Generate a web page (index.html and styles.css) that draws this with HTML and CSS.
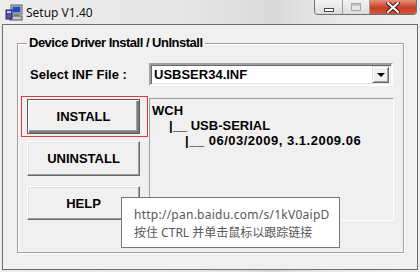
FILE: index.html
```html
<!DOCTYPE html>
<html lang="en">
<head>
	<meta charset="UTF-8">
	<title>Setup V1.40</title>
	<link rel="stylesheet" href="styles.css">
</head>
<body>
	<div class="window">
		<div class="titlebar">
			<svg class="app-icon" width="18" height="17" viewBox="0 0 18 17">
				<rect x="6" y="1" width="11" height="9" fill="#d8d8d8" stroke="#555"/>
				<rect x="7.5" y="2.5" width="8" height="6" fill="#1d4fc4"/>
				<rect x="9" y="10" width="5" height="2" fill="#888"/>
				<rect x="5" y="12" width="12" height="4" fill="#c8c8c8" stroke="#555"/>
				<rect x="1" y="6" width="6" height="9" fill="#5a4fa8" stroke="#2a2060"/>
				<rect x="2" y="7" width="4" height="2" fill="#c7c2ee"/>
			</svg>
			<span class="title">Setup V1.40</span>
			<div class="caption-buttons">
				<div class="cap-btn cap-min"><span class="min-bar"></span></div>
				<div class="cap-btn cap-max"><span class="max-box"></span></div>
				<div class="cap-btn cap-close">
					<svg width="14" height="11" viewBox="0 0 14 11">
						<path d="M2 1 L12 10 M12 1 L2 10" stroke="#4a1a12" stroke-width="4" stroke-linecap="square"/>
						<path d="M2 1 L12 10 M12 1 L2 10" stroke="#fff" stroke-width="2" stroke-linecap="square"/>
					</svg>
				</div>
			</div>
		</div>
		<div class="client">
			<fieldset class="group">
				<legend>Device Driver Install / UnInstall</legend>
				<div class="layout">
					<label class="inf-label">Select INF File :</label>
					<div class="combo">
						<span class="combo-text">USBSER34.INF</span>
						<span class="combo-arrow"><i></i></span>
					</div>
					<div class="buttons">
						<div class="focus-frame">
							<div class="btn btn-default">INSTALL</div>
						</div>
						<div class="btn btn-uninstall">UNINSTALL</div>
						<div class="btn btn-help">HELP</div>
					</div>
					<div class="info-panel">
						<div class="line">WCH</div>
						<div class="line indent1">|__ USB-SERIAL</div>
						<div class="line indent2">|__ 06/03/2009, 3.1.2009.06</div>
					</div>
				</div>
			</fieldset>
		</div>
		<div class="tooltip">
			<div class="tip-url">http://pan.baidu.com/s/1kV0aipD</div>
			<div>按住 CTRL 并单击鼠标以跟踪链接</div>
		</div>
	</div>
</body>
</html>
```

FILE: styles.css
```css
* {
	box-sizing: border-box;
}
body {
	margin: 0;
	width: 420px;
	height: 272px;
	overflow: hidden;
	font-family: "Liberation Sans", Arial, sans-serif;
}
.window {
	position: relative;
	width: 420px;
	height: 272px;
	display: flex;
	flex-direction: column;
	background: linear-gradient(to right, #ececec 0%, #e6e6e6 45%, #d9d9d9 65%, #e9e9e9 80%, #eeeeee 100%);
}
.titlebar {
	height: 24px;
	display: flex;
	align-items: center;
	padding-left: 5px;
}
.app-icon {
	margin-right: 3px;
	margin-top: 1px;
}
.title {
	font-family: "Noto Sans", "Segoe UI", sans-serif;
	font-size: 12px;
	color: #111;
	text-shadow: 0 0 6px #fff;
}
.caption-buttons {
	margin-left: auto;
	margin-right: 3px;
	align-self: flex-start;
	display: flex;
	height: 15px;
	border: 1px solid #707070;
	border-top: none;
	border-radius: 0 0 4px 4px;
	overflow: hidden;
}
.cap-btn {
	height: 14px;
	display: flex;
	align-items: center;
	justify-content: center;
}
.cap-min {
	width: 28px;
	background: linear-gradient(#f4f4f4, #dcdcdc);
	border-right: 1px solid #9a9a9a;
}
.cap-max {
	width: 27px;
	background: linear-gradient(#f4f4f4, #dcdcdc);
	border-right: 1px solid #9a9a9a;
}
.cap-close {
	width: 46px;
	background: linear-gradient(#e8927c, #c73e26 55%, #d4553a);
}
.min-bar {
	width: 10px;
	height: 4px;
	margin-top: 5px;
	border: 1px solid #4a4a4a;
	background: #fff;
}
.max-box {
	width: 10px;
	height: 8px;
	border: 1px solid #a8a8a8;
	box-shadow: inset 0 2px 0 #c4c4c4;
}
.client {
	flex: 1;
	margin: 0 2px 2px 2px;
	border: 1px solid #6d6d6d;
	background: #f0f0f0;
	padding: 10px 13px 16px 14px;
	display: flex;
	flex-direction: column;
}
.group {
	flex: 1;
	margin: 0;
	padding: 0 0 0 3px;
	border: 1px solid #a0a0a0;
	box-shadow: 1px 1px 0 #fff, inset 1px 1px 0 #fff;
	min-width: 0;
}
.group legend {
	margin-left: 6px;
	padding: 0 2px;
	font-size: 13px;
	letter-spacing: -0.5px;
	font-weight: bold;
	line-height: 16px;
	color: #000;
}
.layout {
	display: grid;
	grid-template-columns: 127px 245px;
	grid-template-rows: 23px auto;
	column-gap: 1px;
	row-gap: 10px;
	margin-top: 12px;
}
.inf-label {
	align-self: center;
	padding-left: 9px;
	font-size: 13px;
	font-weight: bold;
}
.combo {
	display: flex;
	align-items: center;
	height: 23px;
	width: 244px;
	background: #fff;
	border: 2px solid;
	border-color: #a0a0a0 #fff #fff #a0a0a0;
	box-shadow: inset 1px 1px 0 #696969, inset -1px -1px 0 #e3e3e3;
	padding: 0 2px 0 3px;
}
.combo-text {
	flex: 1;
	font-size: 13px;
	font-weight: bold;
}
.combo-arrow {
	width: 17px;
	height: 17px;
	background: #f0f0f0;
	border: 1px solid;
	border-color: #e3e3e3 #696969 #696969 #e3e3e3;
	box-shadow: inset 1px 1px 0 #fff, inset -1px -1px 0 #a0a0a0;
	display: flex;
	align-items: center;
	justify-content: center;
}
.combo-arrow i {
	width: 0;
	height: 0;
	border-left: 4px solid transparent;
	border-right: 4px solid transparent;
	border-top: 4px solid #000;
	margin-top: 1px;
}
.buttons {
	display: flex;
	flex-direction: column;
	align-items: flex-start;
}
.focus-frame {
	border: 1px solid #e8363b;
	padding: 2px 5px;
	width: 127px;
	height: 41px;
}
.btn {
	width: 113px;
	height: 35px;
	display: flex;
	align-items: center;
	justify-content: center;
	font-size: 13px;
	font-weight: bold;
	background: #f0f0f0;
	border: 1px solid;
	border-color: #fff #696969 #696969 #fff;
	box-shadow: inset -1px -1px 0 #a0a0a0, inset 1px 1px 0 #e3e3e3;
	color: #000;
}
.btn-default {
	border: 1px solid #5a5a5a;
	box-shadow: inset 1px 1px 0 #fff, inset -2px -2px 0 #7a7a7a, inset -3px -3px 0 #a0a0a0;
}
.btn-uninstall {
	margin: 4px 0 0 6px;
}
.btn-help {
	margin: 10px 0 0 6px;
	height: 34px;
}
.info-panel {
	margin-top: 2px;
	height: 123px;
	border: 1px solid;
	border-color: #a0a0a0 #fff #fff #a0a0a0;
	padding: 4px 2px;
	font-size: 13px;
	font-weight: bold;
	line-height: 15px;
	white-space: nowrap;
}
.indent1 {
	padding-left: 17px;
}
.indent2 {
	padding-left: 33px;
	letter-spacing: 0.5px;
}
.tooltip {
	position: absolute;
	left: 121px;
	top: 197px;
	width: 219px;
	height: 51px;
	background: #fff;
	border: 1px solid #767676;
	padding: 8px 0 0 12px;
	font-family: "Noto Sans", "Noto Sans CJK SC", sans-serif;
	font-size: 12px;
	line-height: 18px;
	color: #575757;
}
.tip-url {
	letter-spacing: 0.25px;
}
```
